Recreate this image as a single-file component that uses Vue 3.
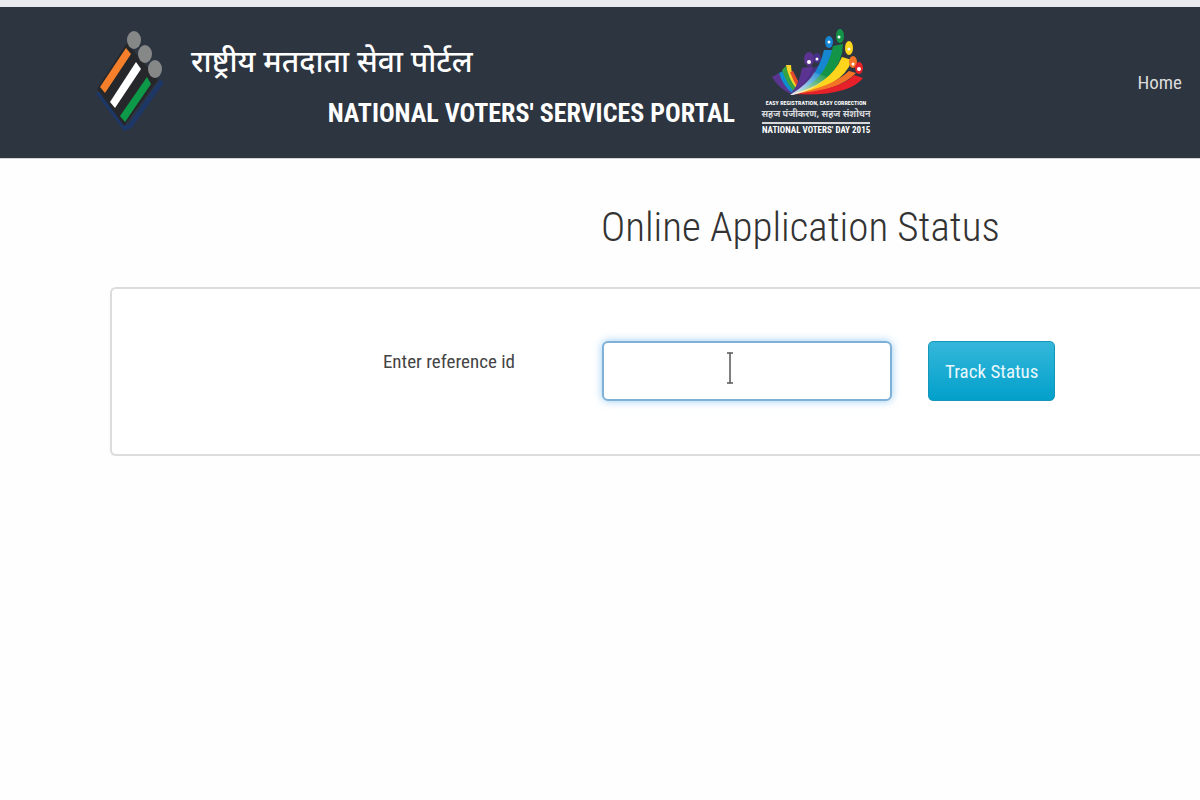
<template>
  <div class="nvsp-page">
    <header class="top-bar">
      <div class="brand">
        <svg class="emblem" viewBox="0 0 70 104" width="70" height="104">
          <path d="M3 61 L30 97 L35 95 L67 50" fill="none" stroke="#1d3767" stroke-width="5"/>
          <path d="M32 12 L2 58 L29 95 L63 49 Z" fill="#25272b"/>
          <path d="M31 17 L36 23 L10 62 L5 56 Z" fill="#f57f2a"/>
          <path d="M41 31 L46 38 L20 77 L15 71 Z" fill="#ffffff"/>
          <path d="M52 46 L56 53 L30 91 L25 85 Z" fill="#0c9a48"/>
          <ellipse cx="39" cy="9" rx="7" ry="9" fill="#868787"/>
          <ellipse cx="50" cy="23" rx="7" ry="9" fill="#868787"/>
          <ellipse cx="60" cy="38" rx="7" ry="9" fill="#868787"/>
        </svg>
        <div class="brand-text">
          <span class="brand-hi" lang="hi">राष्ट्रीय मतदाता सेवा पोर्टल</span>
          <span class="brand-en">NATIONAL VOTERS' SERVICES PORTAL</span>
        </div>
        <div class="day-logo">
          <svg viewBox="0 0 108 68" width="108" height="68">
            <defs>
              <linearGradient id="fade" x1="0" y1="1" x2="1" y2="0">
                <stop offset="0" stop-color="#fff" stop-opacity="0.9"/>
                <stop offset="1" stop-color="#fff" stop-opacity="0"/>
              </linearGradient>
            </defs>
            <path d="M10 49 Q16 60 29 66 L35 64 Q22 57 17 45 Z" fill="#5a3590"/>
            <path d="M17 45 Q21 58 31 66 L34 62 Q25 54 21 43 Z" fill="#0d8fcf"/>
            <path d="M20 42 Q24 54 32 64 L35 60 Q27 51 24 38 Z" fill="#35a344"/>
            <path d="M24 37 Q26 50 34 60 L36 57 Q29 47 29 37 Z" fill="#f6d327"/>
            <path d="M28 44 Q31 52 35 59 L36 53 L31 43 Z" fill="#e34a2c"/>
            <path d="M28 66 Q37 58 40 40 L51 38 Q49 56 28 66 Z" fill="#5b3390"/>
            <path d="M29 66 Q46 55 50 41 L58 37 Q54 58 29 66 Z" fill="#473087"/>
            <path d="M29 66 Q54 54 62 22 L71 22 Q70 54 29 66 Z" fill="#1686d0"/>
            <path d="M30 66 Q64 54 71 18 L81 16 Q80 54 30 66 Z" fill="#149447"/>
            <path d="M30 66 Q68 57 80 29 L90 32 Q80 61 30 66 Z" fill="#fdd51d"/>
            <path d="M31 66 Q70 59 87 43 L94 45 Q76 64 31 66 Z" fill="#f37427"/>
            <path d="M31 66 Q78 62 92 47 L101 50 Q86 69 31 66 Z" fill="#e62129"/>
            <path d="M28 67 Q47 55 52 44 L65 49 Q55 61 31 67 Z" fill="url(#fade)"/>
            <ellipse cx="47" cy="31" rx="5" ry="7" fill="#5b3390"/>
            <ellipse cx="55" cy="30" rx="4" ry="5" fill="#473087"/>
            <ellipse cx="67" cy="14" rx="4" ry="6" fill="#1686d0"/>
            <ellipse cx="78" cy="8" rx="4" ry="7" fill="#149447"/>
            <ellipse cx="87" cy="20" rx="4" ry="7" fill="#fdd51d"/>
            <ellipse cx="91" cy="34" rx="4" ry="6" fill="#f37427"/>
            <ellipse cx="97" cy="40" rx="4" ry="6" fill="#e62129"/>
            <g fill="#fff">
              <circle cx="47" cy="34" r="2"/>
              <circle cx="55" cy="31" r="1.5"/>
              <circle cx="67" cy="14" r="1.5"/>
              <circle cx="77" cy="9" r="1.5"/>
              <circle cx="87" cy="21" r="1.5"/>
              <circle cx="91" cy="36" r="1.5"/>
              <circle cx="97" cy="41" r="2"/>
            </g>
          </svg>
          <span class="day-line slogan">EASY REGISTRATION, EASY CORRECTION</span>
          <span class="day-line slogan-hi" lang="hi">सहज पंजीकरण, सहज संशोधन</span>
          <span class="day-line day-name">NATIONAL VOTERS' DAY 2015</span>
        </div>
      </div>
      <nav>
        <a href="#" class="nav-link">Home</a>
      </nav>
    </header>
    <main>
      <h1>Online Application Status</h1>
      <form class="status-panel" @submit.prevent="trackStatus">
        <label for="reference-id">Enter reference id</label>
        <div class="input-wrap">
          <input id="reference-id" v-model="referenceId" type="text" autocomplete="off">
          <svg class="text-cursor" viewBox="0 0 8 32" width="8" height="32" fill="none" stroke="#555" stroke-width="1.5">
            <path d="M1 1h6M4 1v30M1 31h6"/>
          </svg>
        </div>
        <button type="submit">Track Status</button>
      </form>
    </main>
  </div>
</template>

<script setup>
import { ref } from 'vue'

const referenceId = ref('')

function trackStatus() {
  referenceId.value = referenceId.value.trim()
}
</script>

<style>
body { margin: 0; background: #fefefe; }
</style>

<style scoped>
.nvsp-page { font-family: 'Roboto Condensed', 'Liberation Sans', Arial, sans-serif; color: #444; overflow: hidden; }
.top-bar { display: flex; justify-content: space-between; align-items: center; box-sizing: border-box; min-height: 159px; padding: 0 18px 0 95px; background: #2d3540; border-top: 7px solid #e8eaed; border-bottom: 1px solid #d4d6d8; }
.brand { display: flex; align-items: center; }
.emblem { display: block; flex: none; margin-right: 26px; }
.brand-text { display: flex; flex-direction: column; width: 544px; padding-top: 12px; color: #fff; white-space: nowrap; }
.brand-hi { font-family: 'Noto Sans Devanagari', 'Noto Sans', 'Liberation Sans', sans-serif; font-size: 30px; font-weight: 500; line-height: 48px; }
.brand-en { align-self: flex-end; font-size: 26px; font-weight: 700; line-height: 48px; }
.day-logo { display: flex; flex-direction: column; align-items: center; width: 108px; margin-left: 27px; color: #fff; white-space: nowrap; }
.day-logo svg { display: block; }
.day-line { font-weight: 700; line-height: 13px; }
.slogan { font-size: 6px; }
.slogan-hi { font-family: 'Noto Sans Devanagari', 'Noto Sans', sans-serif; font-size: 9px; color: #d5d7da; }
.day-name { border-top: 2px solid #d5d7da; font-size: 9px; width: 108px; text-align: center; }
.nav-link { color: #dcdcdc; font-size: 19px; text-decoration: none; }
h1 { margin: 0; padding: 40px 0 32px 601px; font-size: 41px; font-weight: 300; line-height: 56px; color: #333; white-space: nowrap; }
.status-panel { display: flex; align-items: flex-start; box-sizing: border-box; min-height: 169px; margin-left: 110px; padding: 52px 0; border: 2px solid #dcdcdc; border-right: 0; border-radius: 6px 0 0 6px; background: #fff; box-shadow: 0 1px 2px rgba(0,0,0,0.05); }
label { width: 403px; margin-right: 87px; padding-top: 8px; font-size: 19px; line-height: 26px; text-align: right; }
.input-wrap { position: relative; flex: none; }
input { display: block; box-sizing: border-box; width: 290px; height: 60px; padding: 8px 12px; border: 2px solid #7fb0d6; border-radius: 6px; background: #fff; box-shadow: 0 0 8px rgba(82,168,236,0.6); font-family: inherit; font-size: 19px; color: #444; outline: none; }
.text-cursor { position: absolute; top: 11px; left: 124px; pointer-events: none; }
button { flex: none; box-sizing: border-box; height: 60px; margin-left: 36px; padding: 0 16px; border: 1px solid #1497b8; border-radius: 5px; background: linear-gradient(#35b7da, #02a0cb); color: #e8f8fd; font-family: inherit; font-size: 19px; cursor: pointer; }
</style>
